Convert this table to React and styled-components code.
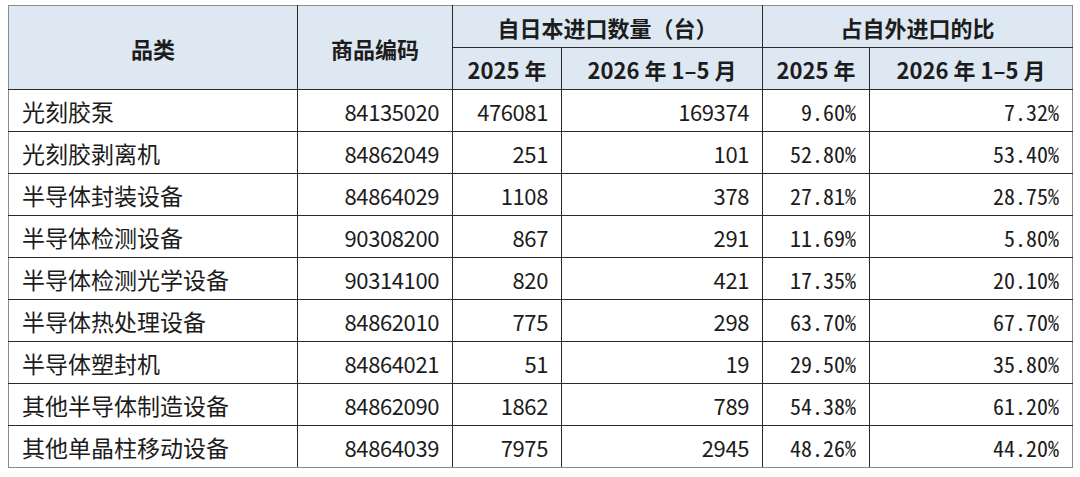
import React from 'react';
import styled, { createGlobalStyle } from 'styled-components';

const GlobalStyle = createGlobalStyle`
  html, body {
    margin: 0;
    padding: 0;
    background: #ffffff;
  }
  body {
    padding: 5px 0 0 8px;
    font-family: "Noto Sans CJK SC", "Noto Sans", sans-serif;
    color: #1c1c1c;
  }
`;

const Table = styled.table`
  border-collapse: collapse;
  table-layout: fixed;
  width: 1064px;
`;

const HeadCell = styled.th`
  background: #dee8f2;
  border: 1px solid #2a2a2a;
  height: 41px;
  padding: 0;
  font-weight: 700;
  font-size: 22px;
  text-align: center;
  vertical-align: middle;
  white-space: nowrap;
  ${(p) => p.$first && 'border-left-color: #8c8c8c;'}
  ${(p) => p.$last && 'border-right-color: #8c8c8c;'}
  ${(p) => p.$top && 'border-top-color: #8c8c8c;'}
`;

const fonts = {
  text: '"Noto Sans CJK SC", "Noto Sans", sans-serif',
  num: '"Noto Sans CJK SC", "Noto Sans", sans-serif',
  pct: '"Noto Sans Mono CJK SC", "DejaVu Sans Mono", monospace',
};

const sizes = { text: '23px', num: '22px', pct: '22px' };
const spacing = { text: '0', num: '-0.4px', pct: '0' };

const Cell = styled.td`
  border: 1px solid #2a2a2a;
  height: 41px;
  padding: 0 13px;
  text-align: ${(p) => (p.$kind === 'text' ? 'left' : 'right')};
  vertical-align: middle;
  white-space: nowrap;
  font-family: ${(p) => fonts[p.$kind]};
  font-size: ${(p) => sizes[p.$kind]};
  letter-spacing: ${(p) => spacing[p.$kind]};
  ${(p) => p.$first && 'border-left-color: #8c8c8c;'}
  ${(p) => p.$last && 'border-right-color: #8c8c8c;'}
  ${(p) => p.$bottom && 'border-bottom-color: #8c8c8c;'}
`;

const rows = [
  ['光刻胶泵', '84135020', '476081', '169374', '9.60%', '7.32%'],
  ['光刻胶剥离机', '84862049', '251', '101', '52.80%', '53.40%'],
  ['半导体封装设备', '84864029', '1108', '378', '27.81%', '28.75%'],
  ['半导体检测设备', '90308200', '867', '291', '11.69%', '5.80%'],
  ['半导体检测光学设备', '90314100', '820', '421', '17.35%', '20.10%'],
  ['半导体热处理设备', '84862010', '775', '298', '63.70%', '67.70%'],
  ['半导体塑封机', '84864021', '51', '19', '29.50%', '35.80%'],
  ['其他半导体制造设备', '84862090', '1862', '789', '54.38%', '61.20%'],
  ['其他单晶柱移动设备', '84864039', '7975', '2945', '48.26%', '44.20%'],
];

export default function App() {
  return (
    <>
      <GlobalStyle />
      <Table>
        <colgroup>
          <col style={{ width: 289 }} />
          <col style={{ width: 155 }} />
          <col style={{ width: 109 }} />
          <col style={{ width: 201 }} />
          <col style={{ width: 107 }} />
          <col style={{ width: 203 }} />
        </colgroup>
        <thead>
          <tr>
            <HeadCell rowSpan={2} $first $top>品类</HeadCell>
            <HeadCell rowSpan={2} $top>商品编码</HeadCell>
            <HeadCell colSpan={2} $top>自日本进口数量（台）</HeadCell>
            <HeadCell colSpan={2} $top $last>占自外进口的比</HeadCell>
          </tr>
          <tr>
            <HeadCell>2025 年</HeadCell>
            <HeadCell>2026 年 1–5 月</HeadCell>
            <HeadCell>2025 年</HeadCell>
            <HeadCell $last>2026 年 1–5 月</HeadCell>
          </tr>
        </thead>
        <tbody>
          {rows.map((r, i) => {
            const bottom = i === rows.length - 1;
            return (
              <tr key={r[0]}>
                <Cell $kind="text" $first $bottom={bottom}>{r[0]}</Cell>
                <Cell $kind="num" $bottom={bottom}>{r[1]}</Cell>
                <Cell $kind="num" $bottom={bottom}>{r[2]}</Cell>
                <Cell $kind="num" $bottom={bottom}>{r[3]}</Cell>
                <Cell $kind="pct" $bottom={bottom}>{r[4]}</Cell>
                <Cell $kind="pct" $last $bottom={bottom}>{r[5]}</Cell>
              </tr>
            );
          })}
        </tbody>
      </Table>
    </>
  );
}
